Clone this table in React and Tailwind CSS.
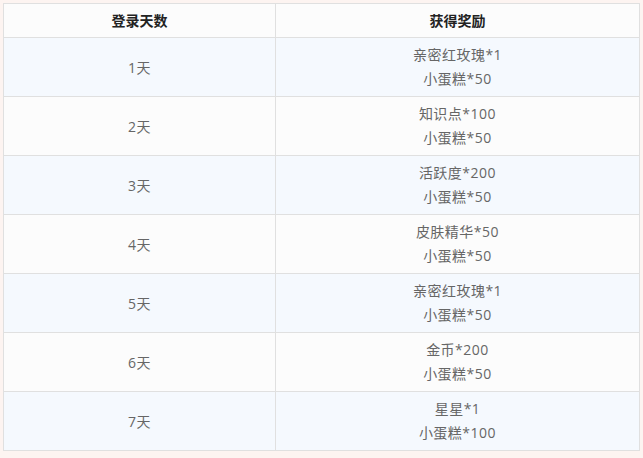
const rows = [
  { day: '1天', rewards: ['亲密红玫瑰*1', '小蛋糕*50'] },
  { day: '2天', rewards: ['知识点*100', '小蛋糕*50'] },
  { day: '3天', rewards: ['活跃度*200', '小蛋糕*50'] },
  { day: '4天', rewards: ['皮肤精华*50', '小蛋糕*50'] },
  { day: '5天', rewards: ['亲密红玫瑰*1', '小蛋糕*50'] },
  { day: '6天', rewards: ['金币*200', '小蛋糕*50'] },
  { day: '7天', rewards: ['星星*1', '小蛋糕*100'] },
];

export default function App() {
  return (
    <div className="min-h-screen bg-[#fdf4f1] p-[3px] font-['Open_Sans','Noto_Sans_CJK_SC',sans-serif]">
      <table className="w-[637px] border-collapse text-center text-[14px]">
        <colgroup>
          <col className="w-[272px]" />
          <col />
        </colgroup>
        <thead>
          <tr className="h-[34px] bg-[#fcfcfc]">
            <th className="border border-[#e0e0e0] font-bold text-[#222]">登录天数</th>
            <th className="border border-[#e0e0e0] font-bold text-[#222]">获得奖励</th>
          </tr>
        </thead>
        <tbody>
          {rows.map((r, i) => (
            <tr key={r.day} className={`h-[59px] ${i % 2 === 0 ? 'bg-[#f5f9fe]' : 'bg-[#fcfcfc]'}`}>
              <td className="border border-[#e0e0e0] text-[#666] tracking-[0.5px]">{r.day}</td>
              <td className="border border-[#e0e0e0] text-[#666] leading-[24px] tracking-[0.5px]">
                {r.rewards.map((t) => (
                  <div key={t}>{t}</div>
                ))}
              </td>
            </tr>
          ))}
        </tbody>
      </table>
    </div>
  );
}
